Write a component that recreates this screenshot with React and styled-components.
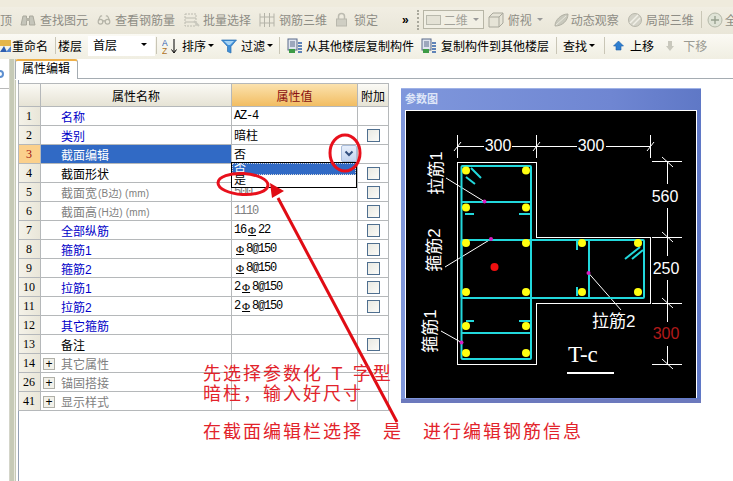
import React from "react";
import styled, { createGlobalStyle } from "styled-components";
import { Glasses } from "lucide-react";

const GlobalStyle = createGlobalStyle`
  html, body {
    margin: 0;
    background: #fff;
    overflow: hidden;
  }
  * {
    box-sizing: border-box;
  }
`;

const CJK = `"Liberation Sans", "Noto Sans CJK SC", sans-serif`;
const NUM = `"Liberation Serif", "Noto Sans CJK SC", serif`;
const MONO = `"Liberation Mono", "Noto Sans CJK SC", monospace`;

const Page = styled.div`
  position: relative;
  width: 733px;
  height: 481px;
  overflow: hidden;
  background: #fff;
  font-family: ${CJK};
  font-size: 12px;
  color: #000;
`;

const TopStrip = styled.div`
  height: 7px;
  background: #efebdd;
`;

const Toolbar = styled.div`
  display: flex;
  align-items: center;
  height: ${(p) => p.$height}px;
  padding-bottom: 2px;
  white-space: nowrap;
  overflow: hidden;
  color: ${(p) => (p.$muted ? "#8e8d85" : "#000")};
  background: ${(p) =>
    p.$muted
      ? "linear-gradient(#f1eee3, #e9e6d8)"
      : "linear-gradient(#fbfaf4, #f0eee2)"};
`;

const Tool = styled.div`
  display: flex;
  align-items: center;
  flex: none;
  gap: ${(p) => p.$gap ?? 4}px;
  margin-left: ${(p) => p.$ml ?? 0}px;
  color: ${(p) => p.$color ?? "inherit"};
  font-weight: ${(p) => (p.$bold ? 700 : 400)};
`;

const Separator = styled.div`
  flex: none;
  width: 1px;
  height: 17px;
  margin-left: ${(p) => p.$ml}px;
  background: #c9c6b6;
`;

const Grip = styled.div`
  flex: none;
  width: 2px;
  height: 20px;
  margin-left: ${(p) => p.$ml}px;
  border-left: 2px dotted #a9a89c;
`;

const Caret = styled.span`
  flex: none;
  width: 0;
  height: 0;
  margin-left: ${(p) => p.$ml ?? -2}px;
  border-left: 3px solid transparent;
  border-right: 3px solid transparent;
  border-top: 3px solid ${(p) => p.$color ?? "#000"};
`;

const ViewCombo = styled.div`
  display: flex;
  align-items: center;
  flex: none;
  width: 61px;
  height: 19px;
  margin-left: ${(p) => p.$ml}px;
  padding: 0 5px 0 2px;
  gap: 3px;
  border: 1px solid #b7b5a6;
  background: #f1efe4;
  color: #a3a29a;
`;

const ViewSwatch = styled.span`
  flex: none;
  width: 15px;
  height: 10px;
  border: 1px solid #b9b9ad;
  background: #e4e2d6;
`;

const FloorCombo = styled.div`
  display: flex;
  align-items: center;
  justify-content: space-between;
  flex: none;
  width: 67px;
  height: 20px;
  margin-left: ${(p) => p.$ml}px;
  padding: 0 8px 3px 5px;
  background: #fff;
`;

const Workspace = styled.div`
  display: flex;
  height: 423px;
`;

const Rail = styled.div`
  display: flex;
  flex: none;
  width: 19px;
`;

const RailPane = styled.div`
  flex: none;
  width: 9px;
  height: 30px;
  border-bottom: 1px solid #b9b9b9;
  overflow: hidden;
`;

const RailStripes = styled.div`
  flex: none;
  width: 10px;
  border-left: 1px solid #d4d5c9;
  border-right: 1px solid #93a0b4;
  background: linear-gradient(
    90deg,
    #c6cab6 0 4px,
    #e8e8de 4px 5px,
    #c6cab6 5px 6px,
    #fff 6px
  );
`;

const Content = styled.div`
  flex: 1;
  min-width: 0;
`;

const TabStrip = styled.div`
  display: flex;
  height: 20px;
  margin-left: -4px;
  border-bottom: 1px solid #a5acb2;
  box-shadow: 0 1px 0 #fff;
`;

const Tab = styled.div`
  width: 63px;
  height: 20px;
  padding-left: 6px;
  line-height: 17px;
  background: #fff;
  border: 1px solid #a5acb2;
  border-top: 2px solid #eeb04a;
  border-bottom: none;
  border-radius: 3px 3px 0 0;
`;

const Body = styled.div`
  display: flex;
  align-items: flex-start;
  padding-top: 4px;
`;

const Table = styled.div`
  flex: none;
  width: 370px;
  border-top: 1px solid #b5b8ba;
`;

const Row = styled.div`
  display: grid;
  grid-template-columns: 23px 191px 126px 31px;
  width: 371px;
  height: ${(p) => (p.$header ? 23 : 19)}px;
  margin-left: -1px;
`;

const Cell = styled.div`
  display: flex;
  align-items: center;
  position: relative;
  border-right: 1px solid #b5b8ba;
  border-bottom: 1px solid #b5b8ba;
`;

const IndexCell = styled(Cell)`
  justify-content: center;
  padding-right: 1px;
  font-family: ${NUM};
  font-size: 12px;
  border-left: 1px solid #b5b8ba;
  color: ${(p) => (p.$active ? "#a01010" : "#000")};
  background: ${(p) =>
    p.$active ? "#fbd08c" : "linear-gradient(90deg, #f4f2e8, #e9e6d9)"};
`;

const NameCell = styled(Cell)`
  padding-left: ${(p) => (p.$group ? 2 : 20)}px;
  padding-top: 1px;
  color: ${(p) =>
    p.$active ? "#fff" : { link: "#0000c8", gray: "#808080" }[p.$tone] ?? "#000"};
  background: ${(p) => (p.$active ? "#316ac5" : "#fff")};
`;

const Unit = styled.span`
  margin-left: 1px;
  font-size: 10px;
  letter-spacing: 0.2px;
  white-space: pre;
`;

const ValueCell = styled(Cell)`
  padding-left: 2px;
  font-family: ${MONO};
  font-size: 12px;
  letter-spacing: ${(p) => (p.$num ? "-1.2px" : 0)};
  color: ${(p) => (p.$gray ? "#808080" : "#000")};
`;

const AddonCell = styled(Cell)`
  justify-content: center;
`;

const Rebar = styled.span`
  margin: 0 2px;
  font-family: ${NUM};
  font-size: 11px;
  letter-spacing: 0;
  text-decoration: underline;
`;

const CheckBox = styled.span`
  width: 13px;
  height: 13px;
  border: 1px solid #4f6f8f;
  background: linear-gradient(135deg, #e9e9e2, #fbfbf8);
`;

const Expander = styled.span`
  display: flex;
  align-items: center;
  justify-content: center;
  width: 12px;
  height: 12px;
  margin-right: 6px;
  font-size: 12px;
  line-height: 1;
  color: #000;
  border: 1px solid #b0b0a8;
  background: #f2f1ea;
`;

const HeaderCell = styled(Cell)`
  justify-content: center;
  padding-top: 1px;
  color: ${(p) => (p.$hot ? "#8a1010" : "#000")};
  border-left: ${(p) => (p.$first ? "1px solid #b5b8ba" : "none")};
  background: ${(p) =>
    p.$hot
      ? "linear-gradient(#fbe2ae, #f2bd62)"
      : "linear-gradient(#fbfaf5, #e6e3d5)"};
`;

const ComboButton = styled.span`
  position: absolute;
  top: 0;
  left: -17px;
  z-index: 2;
  display: flex;
  align-items: center;
  justify-content: center;
  width: 16px;
  height: 17px;
  border: 1px solid #a9bddb;
  border-radius: 2px;
  background: linear-gradient(#e7effb, #c3d4ef);
`;

const OptionList = styled.div`
  position: absolute;
  top: 17px;
  left: -1px;
  z-index: 2;
  width: 126px;
  height: 26px;
  border: 1px solid #000;
  background: #fff;
  overflow: hidden;
`;

const Option = styled.div`
  height: 12px;
  padding-left: 2px;
  line-height: 12px;
  color: ${(p) => (p.$active ? "#fff" : "#000")};
  background: ${(p) => (p.$active ? "#316ac5" : "#fff")};
  outline: ${(p) => (p.$active ? "1px dotted #d8d8d8" : "none")};
  outline-offset: -1px;
`;

const ParamPanel = styled.div`
  flex: none;
  width: 300px;
  height: 315px;
  margin: 5px 0 0 12px;
  padding: 0 4px 5px;
  background: linear-gradient(90deg, #7f97dc, #6f86d2 70%, #5f78c6);
  border-top: 1px solid #9fb2e6;
  box-shadow: inset 0 -4px 0 #6c79bd;
`;

const ParamTitle = styled.div`
  height: 21px;
  line-height: 21px;
  font-size: 11px;
  font-weight: 700;
  color: #dfe6f8;
`;

const ParamCanvas = styled.div`
  height: 288px;
  background: #000;
  border: 1px solid #fff;
  border-bottom: none;
  overflow: hidden;
`;

const DrawingSvg = styled.svg`
  display: block;
`;

const IconSvg = styled.svg`
  flex: none;
`;

const Overlay = styled.svg`
  position: absolute;
  inset: 0;
  z-index: 3;
  pointer-events: none;
`;

const Note = styled.div`
  position: absolute;
  left: ${(p) => p.$left}px;
  top: ${(p) => p.$top}px;
  z-index: 4;
  font-size: 18px;
  line-height: 20px;
  letter-spacing: 2px;
  word-spacing: 1.5px;
  white-space: pre;
  color: #e2232b;
`;

/* toolbar drawings */
const Ico = ({ w = 16, children }) => (
  <IconSvg width={w} height="16" viewBox={`0 0 ${w} 16`}>
    {children}
  </IconSvg>
);

const BinocularsIcon = () => (
  <Ico>
    <path d="M1 13 L3 4 H6.5 V13 Z M9.5 13 V4 H13 L15 13 Z" fill="#c5c5ba" stroke="#aaa99d" />
    <rect x="6" y="6" width="4" height="3" fill="#b5b4a8" />
  </Ico>
);

const SelectIcon = () => (
  <Ico>
    <g fill="none" stroke="#bcbbb0">
      <rect x="1" y="2" width="11" height="12" strokeDasharray="2 1" />
      <path d="M1 6 H12 M1 10 H12" />
      <path d="M10 9 L15 14" stroke="#c9c8bd" strokeWidth="2" />
    </g>
  </Ico>
);

const RebarCubeIcon = () => (
  <Ico>
    <g fill="none" stroke="#b4b3a8">
      <path d="M1 1.5 V14.5 M15 1.5 V14.5 M5.5 1 V15 M10.5 1 V15 M1 5 H15 M1 11 H15" />
    </g>
  </Ico>
);

const LockIcon = () => (
  <Ico w={13}>
    <path d="M3.5 7 V4.5 a3 3 0 0 1 6 0 V7" fill="none" stroke="#bcbbb0" strokeWidth="1.5" />
    <rect x="1.5" y="7" width="10" height="7" fill="#cfcec3" stroke="#b9b8ad" />
  </Ico>
);

const BoxIcon = () => (
  <Ico>
    <path d="M1 5 L5 1 H15 V11 L11 15 H1 Z" fill="#e6e4d7" stroke="#a9a89c" />
    <path d="M1 5 H11 V15 M11 5 L15 1" fill="none" stroke="#a9a89c" />
  </Ico>
);

const OrbitIcon = () => (
  <Ico>
    <path d="M2 14 C2 8 8 2 15 2 C15 9 9 14 2 14 Z" fill="#c9c9bd" stroke="#b1b0a4" />
    <path d="M3 13 L13 4" stroke="#e9e8dd" />
  </Ico>
);

const PartIcon = () => (
  <Ico>
    <circle cx="8" cy="8" r="6.5" fill="#d3d2c7" stroke="#b8b7ab" />
    <path d="M3 11 L11 3 M6 13 L13 6" stroke="#f1f0e7" strokeWidth="1.5" />
  </Ico>
);

const ZoomIcon = () => (
  <Ico>
    <circle cx="8" cy="8" r="7" fill="#dfe3d6" stroke="#b4b8a8" />
    <path d="M8 4 V12 M4 8 H12" stroke="#97a08f" strokeWidth="1.4" />
  </Ico>
);

const RenameIcon = () => (
  <Ico w={11}>
    <rect x="0" y="2" width="11" height="6" fill="#e5b64a" />
    <path d="M0 14 L4 8 L7 14 Z" fill="#2f5fb0" />
    <path d="M6 14 L11 8 V14 Z" fill="#4d82cf" />
  </Ico>
);

const SortIcon = () => (
  <Ico>
    <text x="0" y="7.5" fontSize="8.5" fontFamily="Liberation Sans" fill="#2f5fb0">A</text>
    <text x="0" y="15.5" fontSize="8.5" fontFamily="Liberation Sans" fill="#b0741f">Z</text>
    <path d="M12 1 V14 M9.5 11.5 L12 15 L14.5 11.5" fill="none" stroke="#000" />
  </Ico>
);

const FilterIcon = () => (
  <Ico>
    <path d="M0.5 2 H15.5 L10 8.5 V15 L6.5 13.5 V8.5 Z" fill="#3f8fd8" stroke="#2a6fb0" strokeWidth="0.7" />
    <path d="M3 3 H13 L9 7 H7 Z" fill="#a6d3f4" />
  </Ico>
);

const CopyIcon = () => (
  <Ico>
    <rect x="1" y="1" width="9" height="11" fill="#dfe4ee" stroke="#5a6a8a" />
    <path d="M3 4 H8 M3 6 H8 M3 8 H8" stroke="#5a6a8a" />
    <path d="M2 11 H8 V15 H2 Z" fill="#3d9b45" />
    <path d="M11 5 H15 M11 8 H15 M11 11 H15 M11 14 H15" stroke="#2f5fa8" strokeWidth="1.5" />
  </Ico>
);

const UpIcon = () => (
  <Ico w={13}>
    <path d="M6.5 3 L11.5 8 H9 V12 H4 V8 H1.5 Z" fill="#2f7fd0" stroke="#1f5fa8" strokeWidth="0.6" />
  </Ico>
);

const DownIcon = () => (
  <Ico w={10}>
    <path d="M5 13 L9 8 H7 V3 H3 V8 H1 Z" fill="#c9c8bd" />
  </Ico>
);

const ChevronIcon = () => (
  <svg width="10" height="8" viewBox="0 0 10 8">
    <path d="M1.5 1.5 L5 5 L8.5 1.5" fill="none" stroke="#33507f" strokeWidth="2" />
  </svg>
);

const RailBadge = () => (
  <svg width="9" height="29" viewBox="0 0 9 29">
    <circle cx="0" cy="15" r="3" fill="none" stroke="#5d8fd0" strokeWidth="2" />
  </svg>
);

/* property rows */
const rows = [
  { n: 1, name: "名称", tone: "link", value: "AZ-4", num: true },
  { n: 2, name: "类别", tone: "link", value: "暗柱", check: true },
  { n: 3, name: "截面编辑", active: true, value: "否" },
  { n: 4, name: "截面形状", check: true },
  { n: 5, name: "截面宽", unit: "(B边) (mm)", tone: "gray", value: "500", gray: true, num: true, check: true },
  { n: 6, name: "截面高", unit: "(H边) (mm)", tone: "gray", value: "1110", gray: true, num: true, check: true },
  { n: 7, name: "全部纵筋", tone: "link", value: ["16", "22"], num: true, check: true },
  { n: 8, name: "箍筋1", tone: "link", value: ["", "8@150"], num: true, check: true },
  { n: 9, name: "箍筋2", tone: "link", value: ["", "8@150"], num: true, check: true },
  { n: 10, name: "拉筋1", tone: "link", value: ["2", "8@150"], num: true, check: true },
  { n: 11, name: "拉筋2", tone: "link", value: ["2", "8@150"], num: true, check: true },
  { n: 12, name: "其它箍筋", tone: "link" },
  { n: 13, name: "备注", check: true },
  { n: 14, name: "其它属性", tone: "gray", group: true },
  { n: 26, name: "锚固搭接", tone: "gray", group: true },
  { n: 41, name: "显示样式", tone: "gray", group: true },
];

const PropertyTable = () => (
  <Table>
    <Row $header>
      <HeaderCell $first />
      <HeaderCell>属性名称</HeaderCell>
      <HeaderCell $hot>属性值</HeaderCell>
      <HeaderCell>附加</HeaderCell>
    </Row>
    {rows.map((row) => (
      <Row key={row.n}>
        <IndexCell $active={row.active}>{row.n}</IndexCell>
        <NameCell $active={row.active} $tone={row.tone} $group={row.group}>
          {row.group && <Expander>+</Expander>}
          {row.name}
          {row.unit && <Unit>{row.unit}</Unit>}
        </NameCell>
        <ValueCell $gray={row.gray} $num={row.num}>
          {Array.isArray(row.value) ? (
            <>
              {row.value[0]}
              <Rebar>Φ</Rebar>
              {row.value[1]}
            </>
          ) : (
            row.value
          )}
          {row.active && (
            <OptionList>
              <Option $active>否</Option>
              <Option>是</Option>
            </OptionList>
          )}
        </ValueCell>
        <AddonCell>
          {row.check && <CheckBox />}
          {row.active && (
            <ComboButton>
              <ChevronIcon />
            </ComboButton>
          )}
        </AddonCell>
      </Row>
    ))}
  </Table>
);

/* section drawing, in page coordinates */
const yellowDots = [
  [466, 170.5], [526, 170.5], [466, 207.5], [526, 207.5],
  [466, 243], [526, 243], [582, 243], [638, 243],
  [466, 292], [526, 292], [582, 292], [638, 292],
  [466, 326], [526, 326], [466, 353], [526, 353],
];

const magentaDots = [[484.5, 201.5], [491, 239], [588.5, 273], [461.5, 342.5]];

const DimText = ({ x, y, fill = "#fff", children }) => (
  <text
    x={x}
    y={y}
    fill={fill}
    fontSize="16"
    fontFamily="Liberation Sans"
    textAnchor="middle"
    dominantBaseline="central"
  >
    {children}
  </text>
);

const SideText = ({ x, y, children }) => (
  <text
    x={x}
    y={y}
    fill="#fff"
    fontSize="17"
    fontFamily="Liberation Sans, Noto Sans CJK SC"
    textAnchor="middle"
    dominantBaseline="central"
    transform={`rotate(-90 ${x} ${y})`}
  >
    {children}
  </text>
);

const SectionDrawing = () => (
  <DrawingSvg width="290" height="288" viewBox="406 111 290 288">
    <g stroke="#fff" fill="none" shapeRendering="crispEdges">
      <path d="M457.5 162.5 H536.5 V237.5 H650.5 V303.5 H536.5 V364.5 H457.5 Z" />
      <path d="M457.5 135 V158 M536.5 135 V158 M650.5 135 V158" />
      <path d="M457.5 146.5 H484 M512 146.5 H577 M606 146.5 H650.5" />
      <path d="M652 161.5 H682 M652 237.5 H682 M652 303.5 H682 M652 364.5 H682" />
      <path d="M667.5 162 V184 M667.5 208 V256 M667.5 280 V322 M667.5 346 V364" />
    </g>
    <g stroke="#fff" fill="none">
      <path d="M454 151 L461 142 M533 151 L540 142 M647 151 L654 142" />
      <path d="M662 157 L673 167 M662 232 L673 242 M662 298 L673 308 M662 359 L673 369" />
      <path d="M446 178 L485 202 M445 267 L491 239 M621 310 L588.5 273 M441 331 L461.5 342.5" />
    </g>
    <g stroke="#22d8dc" strokeWidth="2" fill="none">
      <rect x="461.5" y="166" width="69.5" height="193" rx="1" />
      <rect x="461.5" y="240" width="182.5" height="58" rx="1" />
      <path d="M462 202 H531 M462 333 H531 M589 240 V298" />
      <path d="M471 168 L481 178 M466 177 L475 184" />
      <path d="M465 214 H474 M519 214 H531 M466 321 H474 M519 321 H531" />
      <path d="M577 287 V296 M577 240 V250 M625 259 L640 247 M632 259 L643 250" />
    </g>
    {yellowDots.map(([x, y]) => (
      <circle key={`${x}-${y}`} cx={x} cy={y} r="4" fill="#ffff10" />
    ))}
    {magentaDots.map(([x, y]) => (
      <circle key={`${x}-${y}`} cx={x} cy={y} r="2" fill="#d81fc0" />
    ))}
    <circle cx="494.5" cy="267" r="4" fill="#f01010" />
    <DimText x={498} y={145}>300</DimText>
    <DimText x={591} y={145}>300</DimText>
    <DimText x={665} y={196}>560</DimText>
    <DimText x={666} y={268}>250</DimText>
    <DimText x={666} y={333} fill="#b01a1a">300</DimText>
    <SideText x={436} y={173}>拉筋1</SideText>
    <SideText x={434} y={250}>箍筋2</SideText>
    <SideText x={430} y={331}>箍筋1</SideText>
    <text x="592" y="327" fill="#fff" fontSize="17" fontFamily="Liberation Sans, Noto Sans CJK SC">
      拉筋2
    </text>
    <text x="568" y="362" fill="#fff" fontSize="23" fontFamily="Liberation Serif">
      T-c
    </text>
    <path d="M567 373 H614" stroke="#fff" strokeWidth="2" />
  </DrawingSvg>
);

const App = () => (
  <Page>
    <GlobalStyle />
    <TopStrip />
    <Toolbar $muted $height={27}>
      <Tool>顶</Tool>
      <Tool $ml={8}><BinocularsIcon />查找图元</Tool>
      <Tool $ml={9}><Glasses size={14} color="#b5b4a8" />查看钢筋量</Tool>
      <Tool $ml={9} $gap={3}><SelectIcon />批量选择</Tool>
      <Tool $ml={8}><RebarCubeIcon />钢筋三维</Tool>
      <Tool $ml={8} $gap={6}><LockIcon />锁定</Tool>
      <Tool $ml={24} $color="#000" $bold>»</Tool>
      <Grip $ml={8} />
      <ViewCombo $ml={4}>
        <ViewSwatch />二维<Caret $ml={2} $color="#999" />
      </ViewCombo>
      <Tool $ml={4}><BoxIcon />俯视<Caret $ml={1} $color="#999" /></Tool>
      <Tool $ml={10} $gap={2}><OrbitIcon />动态观察</Tool>
      <Tool $ml={8} $gap={3}><PartIcon />局部三维</Tool>
      <Separator $ml={7} />
      <Tool $ml={5} $gap={2}><ZoomIcon />全</Tool>
    </Toolbar>
    <Toolbar $height={25}>
      <Tool $gap={1}><RenameIcon />重命名</Tool>
      <Separator $ml={7} />
      <Tool $ml={2}>楼层</Tool>
      <FloorCombo $ml={6}>首层<Caret $ml={0} /></FloorCombo>
      <Separator $ml={1} />
      <Tool $ml={5}><SortIcon />排序<Caret /></Tool>
      <Tool $ml={7}><FilterIcon />过滤<Caret /></Tool>
      <Separator $ml={6} />
      <Tool $ml={7} $gap={3}><CopyIcon />从其他楼层复制构件</Tool>
      <Tool $ml={7}><CopyIcon />复制构件到其他楼层</Tool>
      <Separator $ml={7} />
      <Tool $ml={6}>查找<Caret /></Tool>
      <Separator $ml={9} />
      <Tool $ml={7} $gap={5}><UpIcon />上移</Tool>
      <Tool $ml={11} $gap={8} $color="#9a9a92"><DownIcon />下移</Tool>
    </Toolbar>
    <Workspace>
      <Rail>
        <RailPane>
          <RailBadge />
        </RailPane>
        <RailStripes />
      </Rail>
      <Content>
        <TabStrip>
          <Tab>属性编辑</Tab>
        </TabStrip>
        <Body>
          <PropertyTable />
          <ParamPanel>
            <ParamTitle>参数图</ParamTitle>
            <ParamCanvas>
              <SectionDrawing />
            </ParamCanvas>
          </ParamPanel>
        </Body>
      </Content>
    </Workspace>
    <Overlay width="733" height="481" viewBox="0 0 733 481">
      <g fill="none" stroke="#e8101c" strokeWidth="3">
        <ellipse cx="345" cy="153" rx="15" ry="18" />
        <ellipse cx="243" cy="184" rx="25" ry="10.5" transform="rotate(3 243 184)" />
      </g>
      <path d="M278 198 L397 422" stroke="#e00c14" strokeWidth="3" />
      <path d="M270 183 L284 191 L272 198 Z" fill="#e00c14" />
    </Overlay>
    <Note $left={203} $top={364}>{"先选择参数化 T 字型\n暗柱，输入好尺寸"}</Note>
    <Note $left={203} $top={422}>在截面编辑栏选择　是　进行编辑钢筋信息</Note>
  </Page>
);

export default App;
